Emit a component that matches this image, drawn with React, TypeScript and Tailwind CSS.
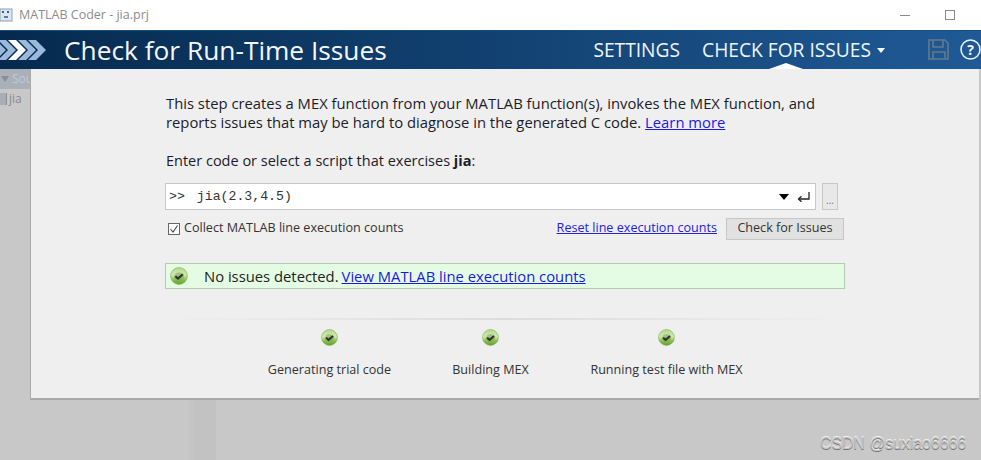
function CheckIcon({ size = 18 }: { size?: number }) {
  return (
    <svg width={size} height={size} viewBox="0 0 18 18" className="shrink-0">
      <defs>
        <linearGradient id="okBall" x1="0" y1="0" x2="0" y2="1">
          <stop offset="0%" stopColor="#b4dc8a" />
          <stop offset="45%" stopColor="#d0e8b0" />
          <stop offset="70%" stopColor="#8ec452" />
          <stop offset="100%" stopColor="#5c9e2e" />
        </linearGradient>
      </defs>
      <circle cx="9" cy="9" r="8.4" fill="url(#okBall)" stroke="#76ac48" strokeWidth="0.6" />
      <ellipse cx="9" cy="9.6" rx="5" ry="4" fill="#7f9a62" opacity="0.55" />
      <path d="M5.4 9.2l2.6 2.3 4.8-4.2" fill="none" stroke="#2a3326" strokeWidth="2.1" />
    </svg>
  );
}

function Chevron({ x, fill }: { x: number; fill: string }) {
  return <path d={`M${x} 0h8l10 10-10 10h-8l10-10z`} fill={fill} />;
}

export default function App() {
  return (
    <div
      className="relative w-[981px] h-[460px] overflow-hidden bg-[#c8c8c8] text-[#222]"
      style={{ fontFamily: '"Open Sans", "Noto Sans", sans-serif' }}
    >
      {/* window title */}
      <div className="flex items-center h-[30px] bg-white">
        <svg width="13" height="14" viewBox="0 0 13 14" className="shrink-0">
          <rect x="0" y="1" width="12" height="12" fill="#dbe6f0" stroke="#8aa0b4" />
          <rect x="2" y="3" width="2" height="2" fill="#40607e" />
          <rect x="7" y="3" width="2" height="2" fill="#40607e" />
          <rect x="4" y="8" width="4" height="2" fill="#607a90" />
        </svg>
        <span className="ml-[6px] text-[12.5px] text-[#8c8c8c]">MATLAB Coder - jia.prj</span>
        <div className="ml-auto mr-[26px] flex items-center gap-[35px]">
          <div className="w-[10px] h-px bg-[#8a8a8a]" />
          <div className="w-[10px] h-[10px] border border-[#8a8a8a]" />
        </div>
      </div>

      {/* header band */}
      <div className="relative flex items-center h-[39px] bg-gradient-to-r from-[#062a4e] to-[#1f5a96] border-t border-[#164d80] text-white">
        <svg width="46" height="20" viewBox="0 0 46 20" className="shrink-0">
          <Chevron x={-12} fill="#9bb9dc" />
          <Chevron x={-2} fill="#9bb9dc" />
          <Chevron x={8} fill="#ffffff" />
          <Chevron x={18} fill="#9bb9dc" />
          <Chevron x={28} fill="#9bb9dc" />
        </svg>
        <span className="ml-[18px] text-[26.3px] leading-none text-[#f4f7fa]">Check for Run-Time Issues</span>
        <div className="ml-auto flex items-center">
          <span className="text-[19.2px] text-[#f0f4f8]">SETTINGS</span>
          <span className="ml-[22px] text-[19.2px] text-[#f0f4f8]">CHECK FOR ISSUES</span>
          <span className="ml-[6px] mt-[1px] border-x-[4px] border-t-[5px] border-x-transparent border-t-white" />
          <svg width="21" height="21" viewBox="0 0 21 21" className="ml-[43px]" fill="none" stroke="#66798c" strokeWidth="1.6">
            <path d="M1 1h16l3 3v16H1z" />
            <path d="M5 1v7h10V1M5 20v-7h12v7" />
          </svg>
          <svg width="21" height="21" viewBox="0 0 21 21" className="ml-[11px]" fill="none">
            <circle cx="10.5" cy="10.5" r="9.5" stroke="#f2f5f8" strokeWidth="1.5" />
            <text x="10.5" y="15.5" textAnchor="middle" fontSize="14" fontWeight="700" fill="#f2f5f8">?</text>
          </svg>
        </div>
        <div className="absolute right-[178px] bottom-0 w-0 h-0 border-x-[17px] border-b-[6px] border-x-transparent border-b-white" />
      </div>

      <div className="flex">
        {/* dimmed source panel */}
        <div className="w-[30px] shrink-0">
          <div className="flex items-center h-[20px] bg-[#a9b0ba] text-[12px] text-[#c4c8ce]">
            <span className="ml-[1px] border-x-[4px] border-t-[6px] border-x-transparent border-t-[#8a8f96]" />
            <span className="ml-[3px]">Sou</span>
          </div>
          <div className="flex items-center h-[20px] text-[12px] text-[#8a8a8a]">
            <div className="w-[7px] h-[12px] bg-[#a8aeb8] border-r border-[#8a8f98]" />
            <span className="ml-[2px]">jia</span>
          </div>
        </div>

        {/* modal panel */}
        <div className="w-[949px] h-[331px] shrink-0 bg-[#efefef] border-l border-b-2 border-[#a9a9a9] pl-[134px] pt-[25px]">
          <p className="ml-px w-[670px] text-[14.8px] leading-[19px] text-[#1c1c2a]">
            This step creates a MEX function from your MATLAB function(s), invokes the MEX function, and reports issues that may be hard to diagnose in the generated C code.{" "}
            <a className="text-[#1a1ae0] underline">Learn more</a>
          </p>
          <p className="ml-px mt-[19px] text-[14.5px] leading-[19px] text-[#1c1c2a]">
            Enter code or select a script that exercises <b>jia</b>:
          </p>

          <div className="mt-[13px] flex items-center">
            <div
              className="flex items-center w-[651px] h-[27px] bg-white border border-[#c8c8c8] pl-[3px] pr-[5px] text-[13.2px] text-[#333]"
              style={{ fontFamily: '"Liberation Mono", monospace' }}
            >
              <span>&gt;&gt;</span>
              <span className="ml-[12px]">jia(2.3,4.5)</span>
              <span className="ml-auto border-x-[5px] border-t-[6px] border-x-transparent border-t-black" />
              <svg width="13" height="10" viewBox="0 0 13 10" className="ml-[8px]" fill="none" stroke="#222" strokeWidth="1.3">
                <path d="M12 0v7H2" />
                <path d="M4.5 4.2L1.5 7l3 2.8" />
              </svg>
            </div>
            <div className="ml-[6px] flex items-end justify-center w-[16px] h-[27px] bg-[#e8e8e8] border border-[#c8c8c8] text-[10px] leading-[18px] text-[#777]">...</div>
          </div>

          <div className="mt-[7px] flex items-center w-[679px] h-[23px] text-[12.6px]">
            <div className="flex items-center justify-center w-[12px] h-[12px] ml-[3px] bg-white border border-[#666]">
              <svg width="10" height="10" viewBox="0 0 10 10" fill="none" stroke="#444" strokeWidth="1.1">
                <path d="M1.5 5l2.5 3 4.5-6.5" />
              </svg>
            </div>
            <span className="ml-[4px] text-[#333]">Collect MATLAB line execution counts</span>
            <a className="ml-auto text-[#2222dd] underline">Reset line execution counts</a>
            <button className="ml-[9px] w-[118px] h-[22px] bg-[#e1e1e1] border border-[#c6c6c6] text-[12.6px] text-[#333]">Check for Issues</button>
          </div>

          <div className="mt-[23px] flex items-center w-[680px] h-[26px] bg-[#e5fce4] border border-[#b4ccb0] text-[14.8px]">
            <span className="ml-[4px] flex"><CheckIcon /></span>
            <span className="ml-[16px] text-[#222]">No issues detected.</span>
            <a className="ml-[3px] text-[#1a1ae0] underline">View MATLAB line execution counts</a>
          </div>

          <div className="mt-[29px] w-[680px] h-[2px] bg-gradient-to-r from-[#efefef] via-[#dcdcdc] to-[#efefef]" />

          <div className="relative h-[70px] text-[12.6px] text-[#333]">
            <div className="absolute left-[102px] top-[9px] w-[125px] flex flex-col items-center gap-[15px]">
              <CheckIcon size={17} />
              <span className="whitespace-nowrap">Generating trial code</span>
            </div>
            <div className="absolute left-[263px] top-[9px] w-[125px] flex flex-col items-center gap-[15px]">
              <CheckIcon size={17} />
              <span className="whitespace-nowrap">Building MEX</span>
            </div>
            <div className="absolute left-[424px] top-[9px] w-[155px] flex flex-col items-center gap-[15px]">
              <CheckIcon size={17} />
              <span className="whitespace-nowrap">Running test file with MEX</span>
            </div>
          </div>
        </div>
      </div>

      {/* splitter below the panel */}
      <div className="flex ml-[189px] h-[60px]">
        <div className="w-[6px] bg-[#c4c4c4]" />
        <div className="w-[21px] bg-[#c2c2c2]" />
      </div>

      <span
        className="absolute left-[820px] top-[435px] text-[15.8px] leading-[17px] text-[#c4c4c4]"
        style={{ fontFamily: '"Liberation Sans", sans-serif', textShadow: "0 1px 0 #777, 0 -1px 0 #f0f0f0" }}
      >
        CSDN @suxiao6666
      </span>
    </div>
  );
}
